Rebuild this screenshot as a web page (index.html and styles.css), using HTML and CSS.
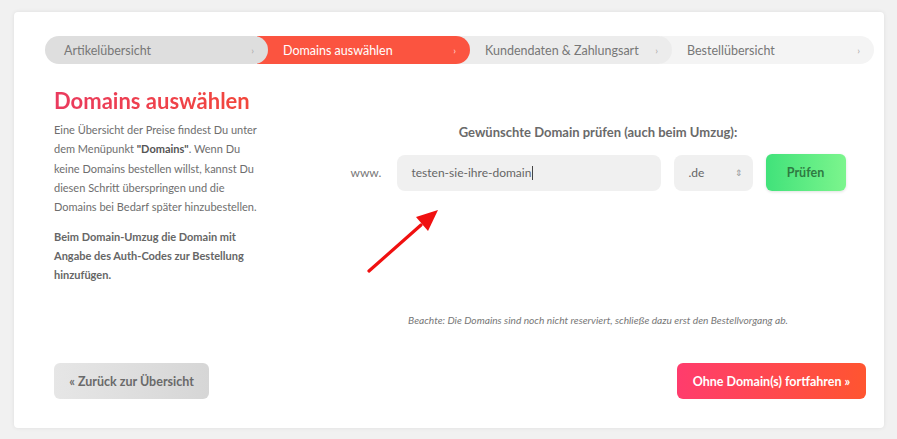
FILE: index.html
```html
<!DOCTYPE html>
<html lang="de">
<head>
<meta charset="utf-8">
<title>Domains auswählen</title>
<link rel="stylesheet" href="styles.css">
</head>
<body>
<div class="card">
  <nav class="steps">
    <div class="step step-done"><span>Artikelübersicht</span><span class="chev">›</span></div>
    <div class="step step-active"><span>Domains auswählen</span><span class="chev">›</span></div>
    <div class="step step-next"><span>Kundendaten &amp; Zahlungsart</span><span class="chev">›</span></div>
    <div class="step step-last"><span>Bestellübersicht</span><span class="chev">›</span></div>
  </nav>

  <main class="content">
    <section class="info">
      <h1 class="title">Domains auswählen</h1>
      <p class="text">Eine Übersicht der Preise findest Du unter dem Menüpunkt <b>"Domains"</b>. Wenn Du keine Domains bestellen willst, kannst Du diesen Schritt überspringen und die Domains bei Bedarf später hinzubestellen.</p>
      <p class="text text-bold">Beim Domain-Umzug die Domain mit Angabe des Auth-Codes zur Bestellung hinzufügen.</p>
    </section>

    <section class="check">
      <h2 class="check-title">Gewünschte Domain prüfen (auch beim Umzug):</h2>
      <div class="check-row">
        <span class="www">www.</span>
        <div class="field">testen-sie-ihre-domain<span class="caret"></span></div>
        <div class="select"><span>.de</span><span class="updown">⇕</span></div>
        <button class="btn-check">Prüfen</button>
      </div>
      <svg class="arrow" width="90" height="80" viewBox="0 0 90 80">
        <line x1="10" y1="69" x2="62" y2="23" stroke="#f01010" stroke-width="3.2" stroke-linecap="round"/>
        <polygon points="79,8 57,15 69,29" fill="#f01010"/>
      </svg>
      <p class="note">Beachte: Die Domains sind noch nicht reserviert, schließe dazu erst den Bestellvorgang ab.</p>
    </section>
  </main>

  <footer class="actions">
    <button class="btn btn-back">« Zurück zur Übersicht</button>
    <button class="btn btn-next">Ohne Domain(s) fortfahren »</button>
  </footer>
</div>
</body>
</html>
```
FILE: styles.css
```css
* { box-sizing: border-box; }
html, body { margin: 0; padding: 0; }
body {
  background: #f1f1f1;
  font-family: Lato, "Open Sans", sans-serif;
  color: #6b6b6b;
  width: 897px;
  height: 439px;
  overflow: hidden;
  padding: 12px 13px 0 14px;
}
.card {
  background: #fff;
  width: 870px;
  height: 416px;
  border-radius: 4px;
  box-shadow: 0 0 4px rgba(0,0,0,0.08);
  padding: 24px 10px 0 31px;
  display: flex;
  flex-direction: column;
}
.steps {
  display: flex;
  height: 28px;
  width: 829px;
}
.step {
  flex: 1;
  display: flex;
  align-items: center;
  justify-content: space-between;
  margin-left: -11px;
  padding: 0 14px 0 26px;
  border-radius: 0 14px 14px 0;
  font-size: 12.5px;
  color: #777;
  position: relative;
}
.chev { font-size: 10px; color: #aaa; }
.step-done {
  flex: 0 0 223px;
  margin-left: 0;
  padding-left: 19px;
  border-radius: 14px;
  background: #dedede;
  z-index: 4;
}
.step-active { background: #fb5440; color: #fff; z-index: 3; }
.step-active .chev { color: #ffd6d0; }
.step-next { background: #ececec; z-index: 2; }
.step-last { background: #f4f4f4; z-index: 1; }

.content {
  display: flex;
  height: 299px;
  padding-left: 9px;
}
.info { width: 215px; flex: 0 0 215px; padding-top: 23px; }
.title {
  margin: 0 0 6px;
  font-size: 22px;
  font-weight: 700;
  line-height: 27px;
  background: linear-gradient(90deg, #ea3a5e, #f2473b);
  -webkit-background-clip: text;
  background-clip: text;
  color: transparent;
  display: inline-block;
}
.text {
  width: 207px;
  margin: 0 0 12px;
  font-size: 11px;
  line-height: 19.3px;
  color: #6e6e6e;
}
.text b { color: #555; }
.text-bold { font-weight: 700; color: #666; line-height: 18.6px; }

.check {
  position: relative;
  margin-left: 53px;
  width: 552px;
  display: flex;
  flex-direction: column;
  align-items: center;
  padding-top: 60px;
}
.check-title {
  margin: 0;
  font-size: 13px;
  font-weight: 700;
  color: #6a6a6a;
  line-height: 16px;
}
.check-row {
  display: flex;
  align-items: center;
  margin-top: 14px;
  width: 495px;
}
.www { font-size: 12px; color: #777; width: 46px; }
.field {
  width: 264px;
  height: 36px;
  border-radius: 8px;
  background: #f0f0f0;
  font-size: 12px;
  color: #666;
  display: flex;
  align-items: center;
  padding-left: 15px;
}
.caret { display: inline-block; width: 1px; height: 14px; background: #444; margin-left: 1px; }
.select {
  margin-left: 13px;
  width: 79px;
  height: 36px;
  border-radius: 8px;
  background: #f0f0f0;
  font-size: 12px;
  color: #666;
  display: flex;
  align-items: center;
  justify-content: space-between;
  padding: 0 10px 0 15px;
}
.updown { font-size: 9px; color: #999; }
.btn-check {
  margin-left: 13px;
  width: 80px;
  height: 37px;
  border: 0;
  border-radius: 6px;
  background: linear-gradient(90deg, #41e27a, #7cf58d);
  color: #2f7a42;
  font-family: inherit;
  font-size: 12.5px;
  font-weight: 700;
  box-shadow: 0 1px 3px rgba(0,0,0,0.12);
}
.arrow { position: absolute; left: 37px; top: 138px; }
.note {
  margin: 0;
  position: absolute;
  top: 250px;
  left: 0;
  right: 0;
  text-align: center;
  font-size: 10.2px;
  font-style: italic;
  color: #777;
}

.actions {
  display: flex;
  justify-content: space-between;
  padding: 0 8px 0 9px;
}
.btn {
  height: 36px;
  border: 0;
  border-radius: 6px;
  font-family: inherit;
  font-size: 12.5px;
  font-weight: 700;
}
.btn-back {
  width: 155px;
  background: linear-gradient(90deg, #e6e6e6, #d6d6d6);
  color: #6a6a6a;
}
.btn-next {
  width: 189px;
  background: linear-gradient(90deg, #ff3c6d, #ff5530);
  color: #fff;
}
```
